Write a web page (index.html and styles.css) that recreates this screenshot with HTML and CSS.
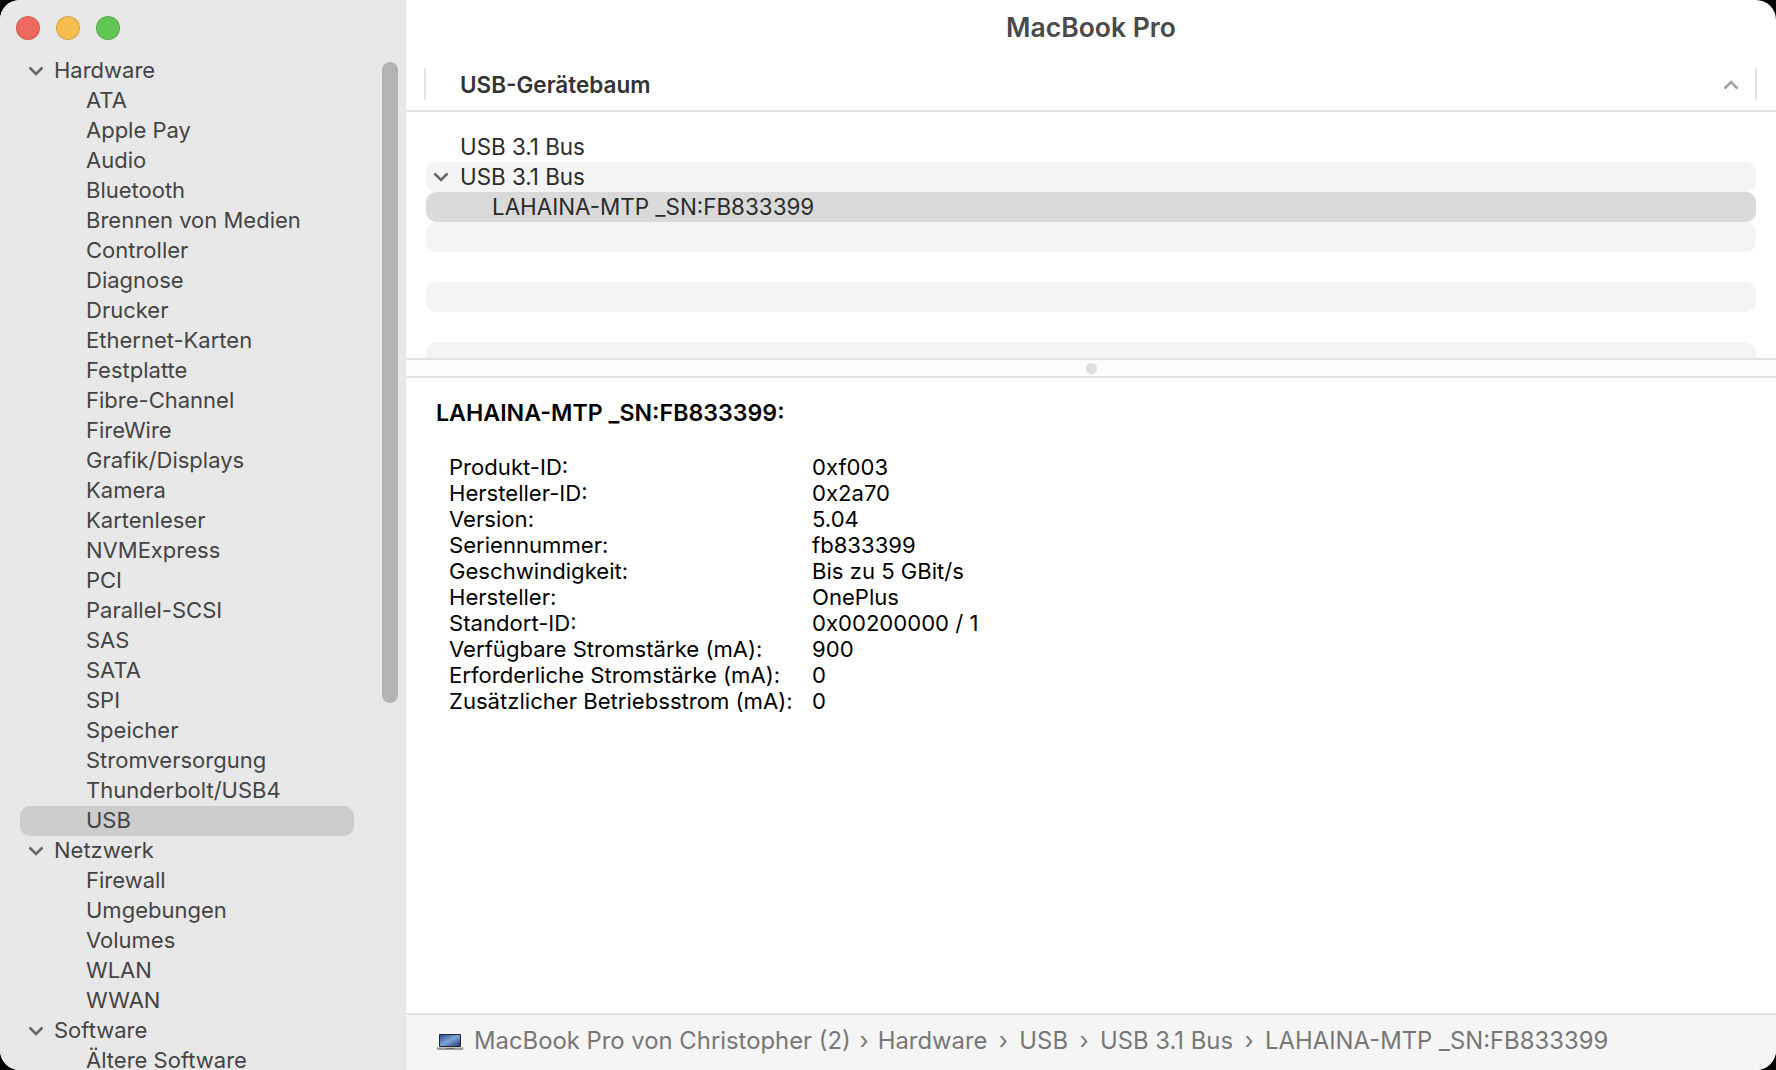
FILE: index.html
```html
<!DOCTYPE html>
<html lang="de">
<head>
<meta charset="utf-8">
<title>MacBook Pro</title>
<link rel="stylesheet" href="styles.css">
</head>
<body>
<div class="window">
  <aside class="sidebar">
    <div class="traffic">
      <span class="light red"></span><span class="light yellow"></span><span class="light green"></span>
    </div>
    <ul class="tree">
      <li class="group"><svg class="chev" viewBox="0 0 16 10"><path d="M1.5 1.5 8 8l6.500-6.500"/></svg>Hardware</li>
      <li>ATA</li><li>Apple Pay</li><li>Audio</li><li>Bluetooth</li><li>Brennen von Medien</li><li>Controller</li><li>Diagnose</li><li>Drucker</li><li>Ethernet-Karten</li><li>Festplatte</li><li>Fibre-Channel</li><li>FireWire</li><li>Grafik/Displays</li><li>Kamera</li><li>Kartenleser</li><li>NVMExpress</li><li>PCI</li><li>Parallel-SCSI</li><li>SAS</li><li>SATA</li><li>SPI</li><li>Speicher</li><li>Stromversorgung</li><li>Thunderbolt/USB4</li>
      <li class="selected">USB</li>
      <li class="group"><svg class="chev" viewBox="0 0 16 10"><path d="M1.500 1.500 8 8l6.500-6.500"/></svg>Netzwerk</li>
      <li>Firewall</li><li>Umgebungen</li><li>Volumes</li><li>WLAN</li><li>WWAN</li>
      <li class="group"><svg class="chev" viewBox="0 0 16 10"><path d="M1.500 1.500 8 8l6.500-6.500"/></svg>Software</li>
      <li>Ältere Software</li>
    </ul>
    <div class="thumb"></div>
  </aside>
  <main class="main">
    <h1 class="title">MacBook Pro</h1>
    <header class="colhead">
      <span class="colname">USB-Gerätebaum</span>
      <svg class="sort" viewBox="0 0 16 10"><path d="M1.500 8.500 8 2l6.500 6.500"/></svg>
    </header>
    <div class="devices">
      <div class="row">USB 3.1 Bus</div>
      <div class="row stripe"><svg class="chev" viewBox="0 0 16 10"><path d="M1.500 1.500 8 8l6.500-6.500"/></svg>USB 3.1 Bus</div>
      <div class="row sel">LAHAINA-MTP _SN:FB833399</div>
      <div class="row stripe"></div>
      <div class="row"></div>
      <div class="row stripe"></div>
      <div class="row"></div>
      <div class="row stripe"></div>
    </div>
    <div class="splitter"><span class="grip"></span></div>
    <section class="detail">
      <h2 class="dtitle">LAHAINA-MTP _SN:FB833399:</h2>
      <dl class="props">
        <dt>Produkt-ID:</dt><dd>0xf003</dd>
        <dt>Hersteller-ID:</dt><dd>0x2a70</dd>
        <dt>Version:</dt><dd>5.04</dd>
        <dt>Seriennummer:</dt><dd>fb833399</dd>
        <dt>Geschwindigkeit:</dt><dd>Bis zu 5 GBit/s</dd>
        <dt>Hersteller:</dt><dd>OnePlus</dd>
        <dt>Standort-ID:</dt><dd>0x00200000 / 1</dd>
        <dt>Verfügbare Stromstärke (mA):</dt><dd>900</dd>
        <dt>Erforderliche Stromstärke (mA):</dt><dd>0</dd>
        <dt>Zusätzlicher Betriebsstrom (mA):</dt><dd>0</dd>
      </dl>
    </section>
    <footer class="path">
      <svg class="laptop" viewBox="0 0 28 18">
        <defs><linearGradient id="scr" x1="0" y1="0" x2="1" y2="1"><stop offset="0" stop-color="#2c4f8c"/><stop offset=".5" stop-color="#7fa3d8"/><stop offset="1" stop-color="#1f3d72"/></linearGradient></defs>
        <rect x="3" y="1" width="22" height="13" rx="1" fill="#23262c"/>
        <rect x="4" y="2" width="20" height="11" fill="url(#scr)"/>
        <path d="M0.500 14.500h27v1.500l-1.500 1H2l-1.500-1z" fill="#9a9c9e"/>
        <rect x="10" y="15" width="8" height="1" fill="#6d6f72"/>
      </svg>
      <span>MacBook Pro von Christopher (2)</span><i class="sep">›</i>
      <span>Hardware</span><i class="sep wide">›</i>
      <span>USB</span><i class="sep wide">›</i>
      <span>USB 3.1 Bus</span><i class="sep wide">›</i>
      <span>LAHAINA-MTP _SN:FB833399</span>
    </footer>
  </main>
</div>
</body>
</html>
```
FILE: styles.css
```css
* { box-sizing: border-box; }
html, body { margin: 0; height: 100%; background: #000; overflow: hidden; }
body { font-family: Inter, "Liberation Sans", sans-serif; font-size: 22px; }
.window { display: flex; width: 1776px; height: 1070px; border-radius: 20px; overflow: hidden; background: #fff; }

.sidebar { position: relative; width: 406px; flex: none; background: #e8e8e8; border-right: 1px solid #e2e2e2; overflow: hidden; }
.traffic { display: flex; gap: 16px; height: 56px; padding: 16px 0 0 16px; }
.light { width: 24px; height: 24px; border-radius: 50%; border: 1px solid rgba(0,0,0,.12); }
.red { background: #ee6a5f; }
.yellow { background: #f5be4f; }
.green { background: #61c554; }
.tree { list-style: none; margin: 0; padding: 0 0 0 20px; color: #444; }
.tree li { display: flex; align-items: center; height: 30px; width: 334px; padding: 0 0 2px 66px; border-radius: 10px; white-space: nowrap; }
.tree li.group { padding-left: 8px; }
.tree li.selected { background: #cdcdcd; }
.chev { width: 16px; height: 10px; margin: 2px 10px 0 0; flex: none; fill: none; stroke: #666; stroke-width: 2.500; }
.thumb { position: absolute; left: 382px; top: 62px; width: 16px; height: 641px; border-radius: 8px; background: #b3b3b3; }

.main { flex: 1; min-width: 0; display: flex; flex-direction: column; height: 1070px; }
.title { margin: 0; height: 55px; padding-top: 12px; font-size: 26.500px; line-height: 30px; font-weight: 600; text-align: center; color: #4a4a4a; }
.colhead { display: flex; align-items: center; justify-content: space-between; height: 57px; margin: 0; padding: 3px 20px 0 54px; border-bottom: 2px solid #e3e3e3; position: relative; }
.colhead::before, .colhead::after { content: ""; position: absolute; top: 13px; width: 2px; height: 32px; background: #e3e3e3; }
.colhead::before { left: 18px; }
.colhead::after { right: 19px; }
.colname { font-size: 22.500px; font-weight: 600; color: #333; }
.sort { width: 16px; height: 10px; margin: 2px 17px 0 0; fill: none; stroke: #a0a0a0; stroke-width: 2.500; }
.devices { height: 246px; padding: 20px 20px 0 20px; overflow: hidden; color: #2b2b2b; font-size: 22.400px; }
.row { display: flex; align-items: center; height: 30px; padding: 0 0 2px 34px; border-radius: 10px; white-space: nowrap; }
.row .chev { margin: 2px 11px 0 -27px; }
.stripe { background: #f4f4f4; }
.sel { background: #dadada; padding-left: 66px; }
.splitter { display: flex; align-items: center; justify-content: center; height: 20px; background: #fcfcfc; border-top: 2px solid #e2e2e2; border-bottom: 2px solid #e2e2e2; flex: none; }
.grip { width: 11px; height: 11px; border-radius: 50%; background: #dedede; }
.detail { flex: 1; padding: 21px 30px 0 30px; color: #000; font-size: 22.100px; }
.dtitle { margin: 0 0 27px; font-size: 23.200px; line-height: 28px; font-weight: 600; }
.props { display: grid; grid-template-columns: 363px 1fr; grid-auto-rows: 26px; align-items: center; margin: 0; padding-left: 13px; }
.props dt, .props dd { margin: 0; white-space: nowrap; }
.path { display: flex; align-items: center; height: 57px; flex: none; padding: 0 0 4px 30px; background: #f5f5f5; border-top: 2px solid #e3e3e3; color: #777; font-size: 23.850px; white-space: nowrap; }
.laptop { width: 28px; height: 18px; margin: 3px 10px 0 0; flex: none; }
.sep { font-style: normal; width: 27px; text-align: center; }
.sep.wide { width: 32px; }
```
